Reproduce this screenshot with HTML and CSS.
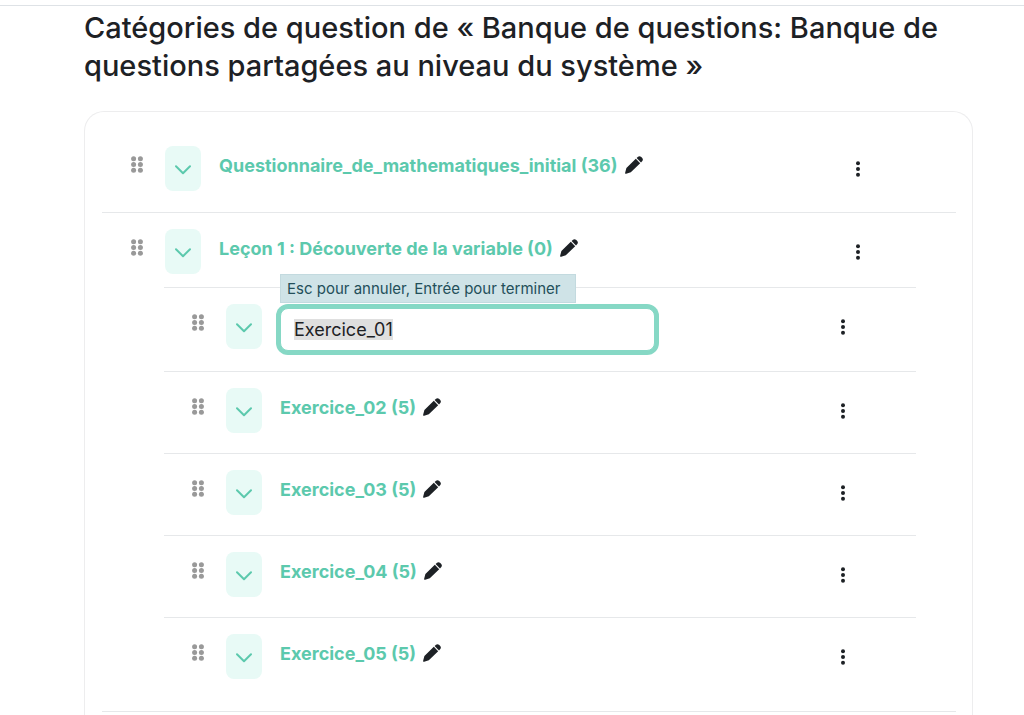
FILE: index.html
```html
<!DOCTYPE html>
<html lang="fr">
<head>
  <meta charset="UTF-8">
  <meta name="viewport" content="width=device-width, initial-scale=1">
  <title>Catégories de question</title>
  <link rel="stylesheet" href="styles.css">
</head>
<body>
  <svg class="sprite" aria-hidden="true">
    <symbol id="grip" viewBox="0 0 12 17">
      <circle cx="2.6" cy="2.8" r="2.5"/><circle cx="9.4" cy="2.8" r="2.5"/>
      <circle cx="2.6" cy="8.5" r="2.5"/><circle cx="9.4" cy="8.5" r="2.5"/>
      <circle cx="2.6" cy="14.2" r="2.5"/><circle cx="9.4" cy="14.2" r="2.5"/>
    </symbol>
    <symbol id="chevron" viewBox="0 0 16 10">
      <path d="M1 1.2 L8 8.2 L15 1.2" fill="none" stroke="currentColor" stroke-width="2" stroke-linecap="round" stroke-linejoin="round"/>
    </symbol>
    <symbol id="pen" viewBox="0 0 18 18">
      <path d="M0.3 17.7 Q0 17.3 0.2 16.6 L1.4 12 L10.8 2.8 L15.2 7.2 L5.8 16.3 L1.2 17.8 Z"/>
      <path d="M11.6 2 L13 0.7 Q14.6 -0.5 16.3 1 L17 1.7 Q18.6 3.4 17.3 5 L16 6.4 Z"/>
    </symbol>
    <symbol id="dots" viewBox="0 0 4 16">
      <circle cx="2" cy="2.3" r="2"/><circle cx="2" cy="8" r="2"/><circle cx="2" cy="13.7" r="2"/>
    </symbol>
  </svg>

  <div class="topbar"></div>

  <main class="page">
    <h1>Catégories de question de « Banque de questions: Banque de questions partagées au niveau du système »</h1>

    <div class="card">
      <ul class="categories">
        <li class="category">
          <div class="row">
            <svg class="grip"><use href="#grip"/></svg>
            <button class="toggle" aria-label="Replier"><svg><use href="#chevron"/></svg></button>
            <div class="name">
              <a href="#">Questionnaire_de_mathematiques_initial (36)</a>
              <button class="edit" aria-label="Modifier le nom"><svg><use href="#pen"/></svg></button>
            </div>
            <button class="menu" aria-label="Actions"><svg><use href="#dots"/></svg></button>
          </div>
        </li>
        <li class="category">
          <div class="row">
            <svg class="grip"><use href="#grip"/></svg>
            <button class="toggle" aria-label="Replier"><svg><use href="#chevron"/></svg></button>
            <div class="name">
              <a href="#">Leçon 1 : Découverte de la variable (0)</a>
              <button class="edit" aria-label="Modifier le nom"><svg><use href="#pen"/></svg></button>
            </div>
            <button class="menu" aria-label="Actions"><svg><use href="#dots"/></svg></button>
          </div>
          <ul class="children">
            <li class="row">
              <svg class="grip"><use href="#grip"/></svg>
              <button class="toggle" aria-label="Replier"><svg><use href="#chevron"/></svg></button>
              <div class="name editing">
                <label class="hint" for="nom">Esc pour annuler, Entrée pour terminer</label>
                <input id="nom" class="name-input" type="text" value="Exercice_01">
              </div>
              <button class="menu" aria-label="Actions"><svg><use href="#dots"/></svg></button>
            </li>
            <li class="row">
              <svg class="grip"><use href="#grip"/></svg>
              <button class="toggle" aria-label="Replier"><svg><use href="#chevron"/></svg></button>
              <div class="name">
                <a href="#">Exercice_02 (5)</a>
                <button class="edit" aria-label="Modifier le nom"><svg><use href="#pen"/></svg></button>
              </div>
              <button class="menu" aria-label="Actions"><svg><use href="#dots"/></svg></button>
            </li>
            <li class="row">
              <svg class="grip"><use href="#grip"/></svg>
              <button class="toggle" aria-label="Replier"><svg><use href="#chevron"/></svg></button>
              <div class="name">
                <a href="#">Exercice_03 (5)</a>
                <button class="edit" aria-label="Modifier le nom"><svg><use href="#pen"/></svg></button>
              </div>
              <button class="menu" aria-label="Actions"><svg><use href="#dots"/></svg></button>
            </li>
            <li class="row">
              <svg class="grip"><use href="#grip"/></svg>
              <button class="toggle" aria-label="Replier"><svg><use href="#chevron"/></svg></button>
              <div class="name">
                <a href="#">Exercice_04 (5)</a>
                <button class="edit" aria-label="Modifier le nom"><svg><use href="#pen"/></svg></button>
              </div>
              <button class="menu" aria-label="Actions"><svg><use href="#dots"/></svg></button>
            </li>
            <li class="row">
              <svg class="grip"><use href="#grip"/></svg>
              <button class="toggle" aria-label="Replier"><svg><use href="#chevron"/></svg></button>
              <div class="name">
                <a href="#">Exercice_05 (5)</a>
                <button class="edit" aria-label="Modifier le nom"><svg><use href="#pen"/></svg></button>
              </div>
              <button class="menu" aria-label="Actions"><svg><use href="#dots"/></svg></button>
            </li>
          </ul>
        </li>
      </ul>
    </div>
  </main>

  <script>
    const champ = document.getElementById('nom');
    champ.focus({ preventScroll: true });
    champ.select();
  </script>
</body>
</html>
```
FILE: styles.css
```css
* { box-sizing: border-box; }
body { margin: 0; background: #fff; color: #1d2125; font-family: Inter, "Liberation Sans", sans-serif; font-size: 18px; }
ul { list-style: none; margin: 0; padding: 0; }
button { border: 0; padding: 0; background: none; color: inherit; cursor: pointer; }
svg { display: block; fill: currentColor; }
.sprite { position: absolute; width: 0; height: 0; }

.topbar { height: 6px; border-bottom: 1px solid #dee2e6; }
.page { padding: 3px 51px 0 84px; }
h1 { margin: 0 0 26px; font-size: 29px; font-weight: 500; line-height: 38px; }

.card { border: 1px solid #ededee; border-bottom: 0; border-radius: 20px 20px 0 0; padding: 18px 16px 3px 17px; }

.row { display: flex; align-items: flex-start; padding: 16px 0 20px 28px; }
.category { border-bottom: 1px solid #e6e8ea; }
.category > .row { padding: 16px 88px 21px 29px; }
.category + .category > .row { padding-bottom: 13px; }

.children { margin: 0 40px 12px 62px; }
.children .row { border-top: 1px solid #e6e8ea; padding-right: 63px; }

.grip { width: 12px; height: 17px; margin: 10px 22px 0 0; color: #999; flex: none; }
.toggle { width: 36px; height: 45px; border-radius: 8px; background: #e8faf6; color: #5cc9ad; display: flex; align-items: center; justify-content: center; flex: none; padding-top: 2px; }
.toggle svg { width: 16px; height: 10px; }

.name { display: flex; align-items: center; gap: 7px; flex: 1; margin: 8px 0 0 18px; line-height: 24px; }
.name a { color: #5cc9ad; font-weight: 700; text-decoration: none; }
.edit { padding-bottom: 2px; }
.edit svg { width: 18px; height: 18px; }
.menu { width: 20px; height: 45px; display: flex; align-items: center; justify-content: center; flex: none; }
.menu svg { width: 4px; height: 16px; }

.editing { position: relative; margin-top: 4px; }
.name-input { width: 375px; height: 43px; padding: 0 13px; border: 1px solid #86d8c5; border-radius: 8px; outline: 0; box-shadow: 0 0 0 4px #86d8c5; background: #fff; color: #1d2125; font: inherit; line-height: 26px; caret-color: transparent; }
.name-input::selection { background: #dfdfdf; color: #1d2125; }
.hint { position: absolute; left: 0; bottom: 48px; padding: 2px 14px 2px 6px; border: 1px solid #c3dadf; background: #cfe3e7; color: #234f5a; font-size: 15px; line-height: 23px; white-space: nowrap; }
```
